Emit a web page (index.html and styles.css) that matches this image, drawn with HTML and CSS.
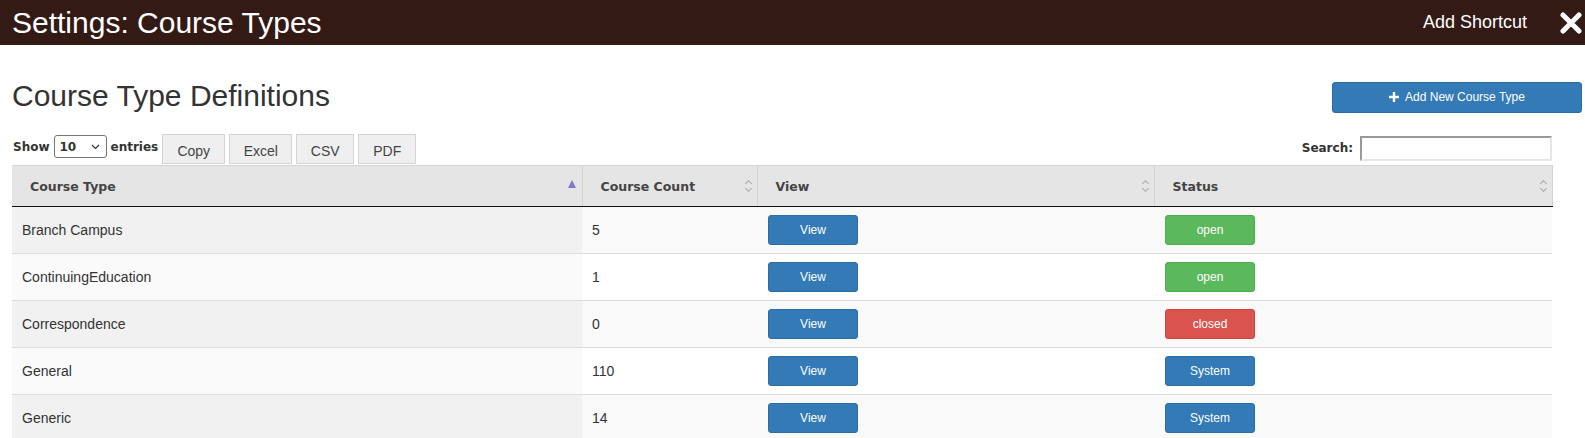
FILE: index.html
```html
<!DOCTYPE html>
<html>
<head>
  <title>Settings: Course Types</title>
  <link rel="stylesheet" href="styles.css">
</head>
<body>
  <div class="top-bar">
    <div class="page-title">Settings: Course Types</div>
    <div class="top-actions">
      <span class="shortcut">Add Shortcut</span>
      <svg class="close-icon" width="24" height="22" viewBox="0 0 24 22">
        <path d="M4 3 L20 19 M20 3 L4 19" stroke="#fff" stroke-width="5" stroke-linecap="round"/>
      </svg>
    </div>
  </div>

  <div class="content">
    <div class="heading-row">
      <h1>Course Type Definitions</h1>
      <button class="btn btn-primary btn-add">
        <svg width="10" height="10" viewBox="0 0 10 10"><path d="M5 0 V10 M0 5 H10" stroke="#fff" stroke-width="2.4"/></svg>
        Add New Course Type
      </button>
    </div>

    <div class="table-wrap">
      <div class="controls">
        <div class="left-controls">
          <label class="length">Show
            <span class="select">10 <svg width="9" height="6" viewBox="0 0 9 6"><path d="M1 1 L4.5 4.5 L8 1" stroke="#333" stroke-width="1.2" fill="none"/></svg></span>
            entries</label>
          <div class="export">
            <button class="btn-export">Copy</button>
            <button class="btn-export">Excel</button>
            <button class="btn-export narrow">CSV</button>
            <button class="btn-export narrow">PDF</button>
          </div>
        </div>
        <label class="search">Search: <input type="text"></label>
      </div>

      <table class="data-table">
        <colgroup>
          <col style="width: 570px">
          <col style="width: 175px">
          <col style="width: 397px">
          <col style="width: 398px">
        </colgroup>
        <thead>
          <tr>
            <th><div class="th-inner">Course Type <span class="sort-asc"></span></div></th>
            <th><div class="th-inner">Course Count <span class="sort-both"></span></div></th>
            <th><div class="th-inner">View <span class="sort-both"></span></div></th>
            <th><div class="th-inner">Status <span class="sort-both"></span></div></th>
          </tr>
        </thead>
        <tbody>
          <tr>
            <td class="sorted">Branch Campus</td>
            <td>5</td>
            <td><button class="btn btn-primary">View</button></td>
            <td><button class="btn btn-success">open</button></td>
          </tr>
          <tr>
            <td class="sorted">ContinuingEducation</td>
            <td>1</td>
            <td><button class="btn btn-primary">View</button></td>
            <td><button class="btn btn-success">open</button></td>
          </tr>
          <tr>
            <td class="sorted">Correspondence</td>
            <td>0</td>
            <td><button class="btn btn-primary">View</button></td>
            <td><button class="btn btn-danger">closed</button></td>
          </tr>
          <tr>
            <td class="sorted">General</td>
            <td>110</td>
            <td><button class="btn btn-primary">View</button></td>
            <td><button class="btn btn-primary">System</button></td>
          </tr>
          <tr>
            <td class="sorted">Generic</td>
            <td>14</td>
            <td><button class="btn btn-primary">View</button></td>
            <td><button class="btn btn-primary">System</button></td>
          </tr>
        </tbody>
      </table>
    </div>
  </div>
</body>
</html>
```

FILE: styles.css
```css
body {
  margin: 0;
  font-family: "Liberation Sans", Arial, sans-serif;
  color: #333;
  background-color: #fff;
}

.top-bar {
  display: flex;
  justify-content: space-between;
  align-items: center;
  height: 45px;
  background-color: #341a15;
  color: #fff;
  padding: 0 2px 0 12px;
}

.page-title {
  font-size: 30px;
  line-height: 45px;
}

.top-actions {
  display: flex;
  align-items: center;
}

.shortcut {
  font-size: 18px;
  margin-right: 32px;
}

.close-icon {
  display: block;
  margin-top: 1px;
}

.content {
  padding: 0 3px 0 12px;
}

.heading-row {
  display: flex;
  justify-content: space-between;
  align-items: center;
  height: 88px;
  padding-bottom: 1px;
}

h1 {
  margin: 0;
  font-size: 30px;
  font-weight: normal;
  color: #333;
  margin-top: 14px;
}

.btn {
  display: inline-flex;
  justify-content: center;
  align-items: center;
  gap: 6px;
  width: 90px;
  height: 30px;
  font-family: "Liberation Sans", Arial, sans-serif;
  font-size: 12px;
  color: #fff;
  border: 1px solid;
  border-radius: 3px;
  padding: 0;
  cursor: pointer;
}

.btn-primary {
  background-color: #337ab7;
  border-color: #2e6da4;
}

.btn-success {
  background-color: #5cb85c;
  border-color: #4cae4c;
}

.btn-danger {
  background-color: #d9534f;
  border-color: #d43f3a;
}

.btn-add {
  width: 250px;
  height: 31px;
  margin-top: 16px;
}

.table-wrap {
  width: 1540px;
}

.controls {
  display: flex;
  justify-content: space-between;
  align-items: flex-start;
  height: 31px;
}

.left-controls {
  display: flex;
  align-items: flex-start;
}

.length,
.search {
  display: flex;
  align-items: center;
  font-family: "DejaVu Sans", Verdana, sans-serif;
  font-size: 12px;
  font-weight: bold;
  color: #333;
  height: 23px;
  margin-top: 1px;
}

.length {
  margin-left: 1px;
}

.select {
  display: inline-flex;
  align-items: center;
  justify-content: space-between;
  width: 53px;
  height: 23px;
  box-sizing: border-box;
  border: 1px solid #767676;
  border-radius: 3px;
  padding: 0 6px 0 5px;
  margin: 0 4px;
  background: #fff;
}

.export {
  display: flex;
  gap: 4px;
  margin-left: 4px;
}

.btn-export {
  width: 63px;
  height: 30px;
  background-color: #efefef;
  border: 1px solid #d4d4d4;
  font-family: "Liberation Sans", Arial, sans-serif;
  font-size: 14px;
  color: #444;
  padding: 3px 0 0 0;
}

.btn-export.narrow {
  width: 58px;
}

.search {
  height: 26px;
}

.search input {
  width: 192px;
  height: 25px;
  box-sizing: border-box;
  margin-left: 7px;
  border: 2px solid #e6e6e6;
  border-top-color: #999;
  border-left-color: #999;
}

.data-table {
  width: 1540px;
  table-layout: fixed;
  border-collapse: collapse;
  font-size: 14px;
}

.data-table th {
  height: 40px;
  padding: 0 4px 0 18px;
  background-color: #e5e5e5;
  border-top: 1px solid #d4d4d4;
  border-left: 1px solid #d4d4d4;
  border-bottom: 1px solid #111;
  text-align: left;
  font-family: "DejaVu Sans", Verdana, sans-serif;
  font-size: 12.5px;
  font-weight: bold;
  color: #444;
}

.data-table th:first-child {
  border-left: none;
}

.data-table th:last-child {
  border-right: 1px solid #d4d4d4;
}

.th-inner {
  display: flex;
  justify-content: space-between;
  align-items: center;
}

.sort-asc {
  width: 0;
  height: 0;
  border-left: 4px solid transparent;
  border-right: 4px solid transparent;
  border-bottom: 8px solid #7b7bd6;
  margin-right: 2px;
  margin-top: -4px;
}

.sort-both {
  width: 9px;
  height: 12px;
  position: relative;
}

.sort-both::before,
.sort-both::after {
  content: "";
  position: absolute;
  left: 2px;
  width: 4px;
  height: 4px;
  border-left: 1.5px solid #aaa;
  border-top: 1.5px solid #aaa;
}

.sort-both::before {
  top: 1px;
  transform: rotate(45deg);
}

.sort-both::after {
  top: 6px;
  transform: rotate(-135deg);
}

.data-table td {
  height: 30px;
  padding: 8px 10px 8px 10px;
  border-top: 1px solid #ddd;
  color: #333;
}

.data-table td:nth-child(3),
.data-table td:nth-child(4) {
  padding-left: 11px;
}

.data-table tbody tr:first-child td {
  border-top: none;
}

.data-table tbody tr:nth-child(odd) td {
  background-color: #f9f9f9;
}

.data-table tbody tr:nth-child(odd) td.sorted {
  background-color: #f1f1f1;
}

.data-table tbody tr:nth-child(even) td {
  background-color: #fff;
}

.data-table tbody tr:nth-child(even) td.sorted {
  background-color: #fafafa;
}
```
